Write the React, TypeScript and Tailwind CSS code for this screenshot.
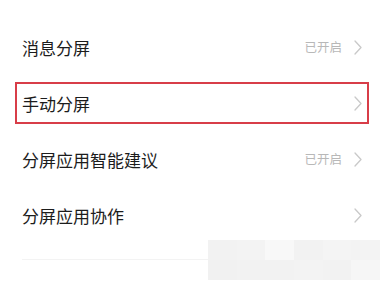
const rows = [
  { label: "消息分屏", value: "已开启" },
  { label: "手动分屏", value: "", highlight: true },
  { label: "分屏应用智能建议", value: "已开启" },
  { label: "分屏应用协作", value: "" },
];

function Chevron() {
  return (
    <svg width="8" height="15" viewBox="0 0 8 15" fill="none" className="shrink-0">
      <path d="M1 1l6 6.5L1 14" stroke="#c9c9c9" strokeWidth="1.3" strokeLinecap="round" strokeLinejoin="round" />
    </svg>
  );
}

export default function App() {
  return (
    <div
      className="relative h-[287px] w-[387px] overflow-hidden bg-white pt-[19px]"
      style={{ fontFamily: '"Noto Sans CJK SC", "Noto Sans", sans-serif' }}
    >
      {rows.map((r) => (
        <div key={r.label} className="relative flex h-[56px] items-center pl-[22px] pr-[25px]">
          <span className="flex-1 text-[17px] leading-none text-[#1c1c1c]">{r.label}</span>
          {r.value && <span className="mr-[12px] text-[12.5px] leading-none text-[#b8b8b8]">{r.value}</span>}
          <Chevron />
          {r.highlight && (
            <div className="absolute left-[15px] top-[7px] h-[42px] w-[354px] border-2 border-[#d83d48]" />
          )}
        </div>
      ))}
      <div className="ml-[22px] mt-[16px] h-px w-[190px] bg-[#f3f3f3]" />
      <div className="absolute left-[208px] top-[240px] grid h-[40px] w-[172px] grid-cols-6 grid-rows-2">
        <div className="bg-[#f2f2f2]" />
        <div className="bg-[#f3f3f3]" />
        <div className="bg-[#f8f8f8]" />
        <div className="bg-[#f2f2f2]" />
        <div className="bg-[#f4f4f4]" />
        <div className="bg-[#f3f3f3]" />
        <div className="bg-[#f1f1f1]" />
        <div className="bg-[#f2f2f2]" />
        <div className="bg-[#f2f2f2]" />
        <div className="bg-[#f3f3f3]" />
        <div className="bg-[#f2f2f2]" />
        <div className="bg-[#f6f6f6]" />
      </div>
    </div>
  );
}
